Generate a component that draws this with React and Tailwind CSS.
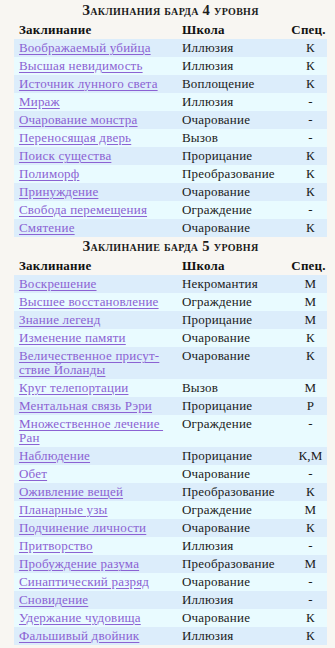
import React from "react";

const t4 = [
  ["Воображаемый убийца", "Иллюзия", "К"],
  ["Высшая невидимость", "Иллюзия", "К"],
  ["Источник лунного света", "Воплощение", "К"],
  ["Мираж", "Иллюзия", "-"],
  ["Очарование монстра", "Очарование", "-"],
  ["Переносящая дверь", "Вызов", "-"],
  ["Поиск существа", "Прорицание", "К"],
  ["Полиморф", "Преобразование", "К"],
  ["Принуждение", "Очарование", "К"],
  ["Свобода перемещения", "Ограждение", "-"],
  ["Смятение", "Очарование", "К"],
];

const t5 = [
  ["Воскрешение", "Некромантия", "М"],
  ["Высшее восстановление", "Ограждение", "М"],
  ["Знание легенд", "Прорицание", "М"],
  ["Изменение памяти", "Очарование", "К"],
  [["Величественное присут-", "ствие Йоланды"], "Очарование", "К"],
  ["Круг телепортации", "Вызов", "М"],
  ["Ментальная связь Рэри", "Прорицание", "Р"],
  [["Множественное лечение ", "Ран"], "Ограждение", "-"],
  ["Наблюдение", "Прорицание", "К,М"],
  ["Обет", "Очарование", "-"],
  ["Оживление вещей", "Преобразование", "К"],
  ["Планарные узы", "Ограждение", "М"],
  ["Подчинение личности", "Очарование", "К"],
  ["Притворство", "Иллюзия", "-"],
  ["Пробуждение разума", "Преобразование", "М"],
  ["Синаптический разряд", "Очарование", "-"],
  ["Сновидение", "Иллюзия", "-"],
  ["Удержание чудовища", "Очарование", "К"],
  ["Фальшивый двойник", "Иллюзия", "К"],
];

function Name({ v }) {
  const cls =
    "text-[#8b62d3] underline underline-offset-[2px] decoration-[1px] whitespace-pre";
  if (Array.isArray(v)) {
    return (
      <span className={cls}>
        {v[0]}
        <br />
        {v[1]}
      </span>
    );
  }
  return <span className={cls}>{v}</span>;
}

function Table({ title, rows }) {
  return (
    <div>
      <div className="h-[20px] flex items-center justify-center font-bold text-[14.5px] text-[#1c1c1c] [font-variant:small-caps] tracking-[0.3px]">
        {title}
      </div>
      <div className="grid grid-cols-[168px_104px_1fr] h-[18px] items-center font-bold text-[13px] leading-[14px] text-[#111] tracking-[0.2px]">
        <div className="pl-[5px]">Заклинание</div>
        <div>Школа</div>
        <div className="text-center pl-[4px]">Спец.</div>
      </div>
      {rows.map((r, i) => (
        <div
          key={i}
          className={
            "grid grid-cols-[168px_104px_1fr] py-[2px] text-[13px] leading-[14px] text-[#1a1a1a] tracking-[0.2px] " +
            (i % 2 === 0 ? "bg-[#dcedfb]" : "bg-[#e9fbff]")
          }
        >
          <div className="pl-[5px] pr-[4px]">
            <Name v={r[0]} />
          </div>
          <div>{r[1]}</div>
          <div className="text-center pl-[8px]">{r[2]}</div>
        </div>
      ))}
    </div>
  );
}

export default function App() {
  return (
    <div className="w-[335px] h-[648px] bg-[#f8f6f2] overflow-hidden font-['Liberation_Serif',serif]">
      <div className="ml-[14px] mr-[8px] pt-[1px]">
        <Table title="Заклинания барда 4 уровня" rows={t4} />
        <Table title="Заклинание барда 5 уровня" rows={t5} />
      </div>
    </div>
  );
}
